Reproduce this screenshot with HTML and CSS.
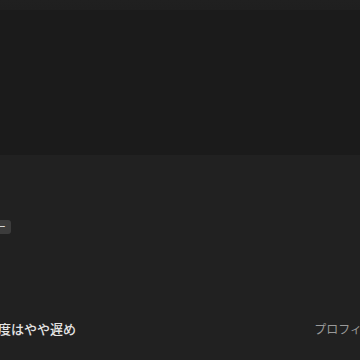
FILE: index.html
```html
<!DOCTYPE html>
<html lang="ja">
<head>
<meta charset="utf-8">
<link rel="stylesheet" href="styles.css">
</head>
<body>
<div class="topbar"></div>
<div class="hero"></div>
<div class="content">
  <div class="tagrow"><span class="tag">ユーザー</span></div>
  <div class="footer">
    <span class="note">速度はやや遅め</span>
    <span class="link">プロフィール</span>
  </div>
</div>
</body>
</html>
```
FILE: styles.css
```css
html, body {
  margin: 0;
  padding: 0;
  width: 360px;
  height: 360px;
  overflow: hidden;
  background: #212121;
  font-family: "Noto Sans CJK JP", "Noto Sans", sans-serif;
}
.topbar {
  height: 10px;
  background: linear-gradient(#202020, #1f1f1f);
}
.hero {
  height: 145px;
  background: #1b1b1b;
}
.content {
  height: 205px;
  background: #212121;
  display: flex;
  flex-direction: column;
}
.tagrow {
  margin-top: 65px;
  margin-left: -39px;
  display: flex;
}
.tag {
  background: #3c3c3c;
  color: #eeeeee;
  font-size: 10px;
  line-height: 14px;
  padding: 0 5px;
  border-radius: 3px;
}
.footer {
  margin-top: 86px;
  display: flex;
  justify-content: space-between;
  margin-left: -15px;
  margin-right: -26px;
  align-items: center;
}
.note {
  color: #e4e4e4;
  font-size: 13px;
  font-weight: 500;
  line-height: 18px;
}
.link {
  color: #9a9a9a;
  font-size: 12px;
  line-height: 18px;
}
```
